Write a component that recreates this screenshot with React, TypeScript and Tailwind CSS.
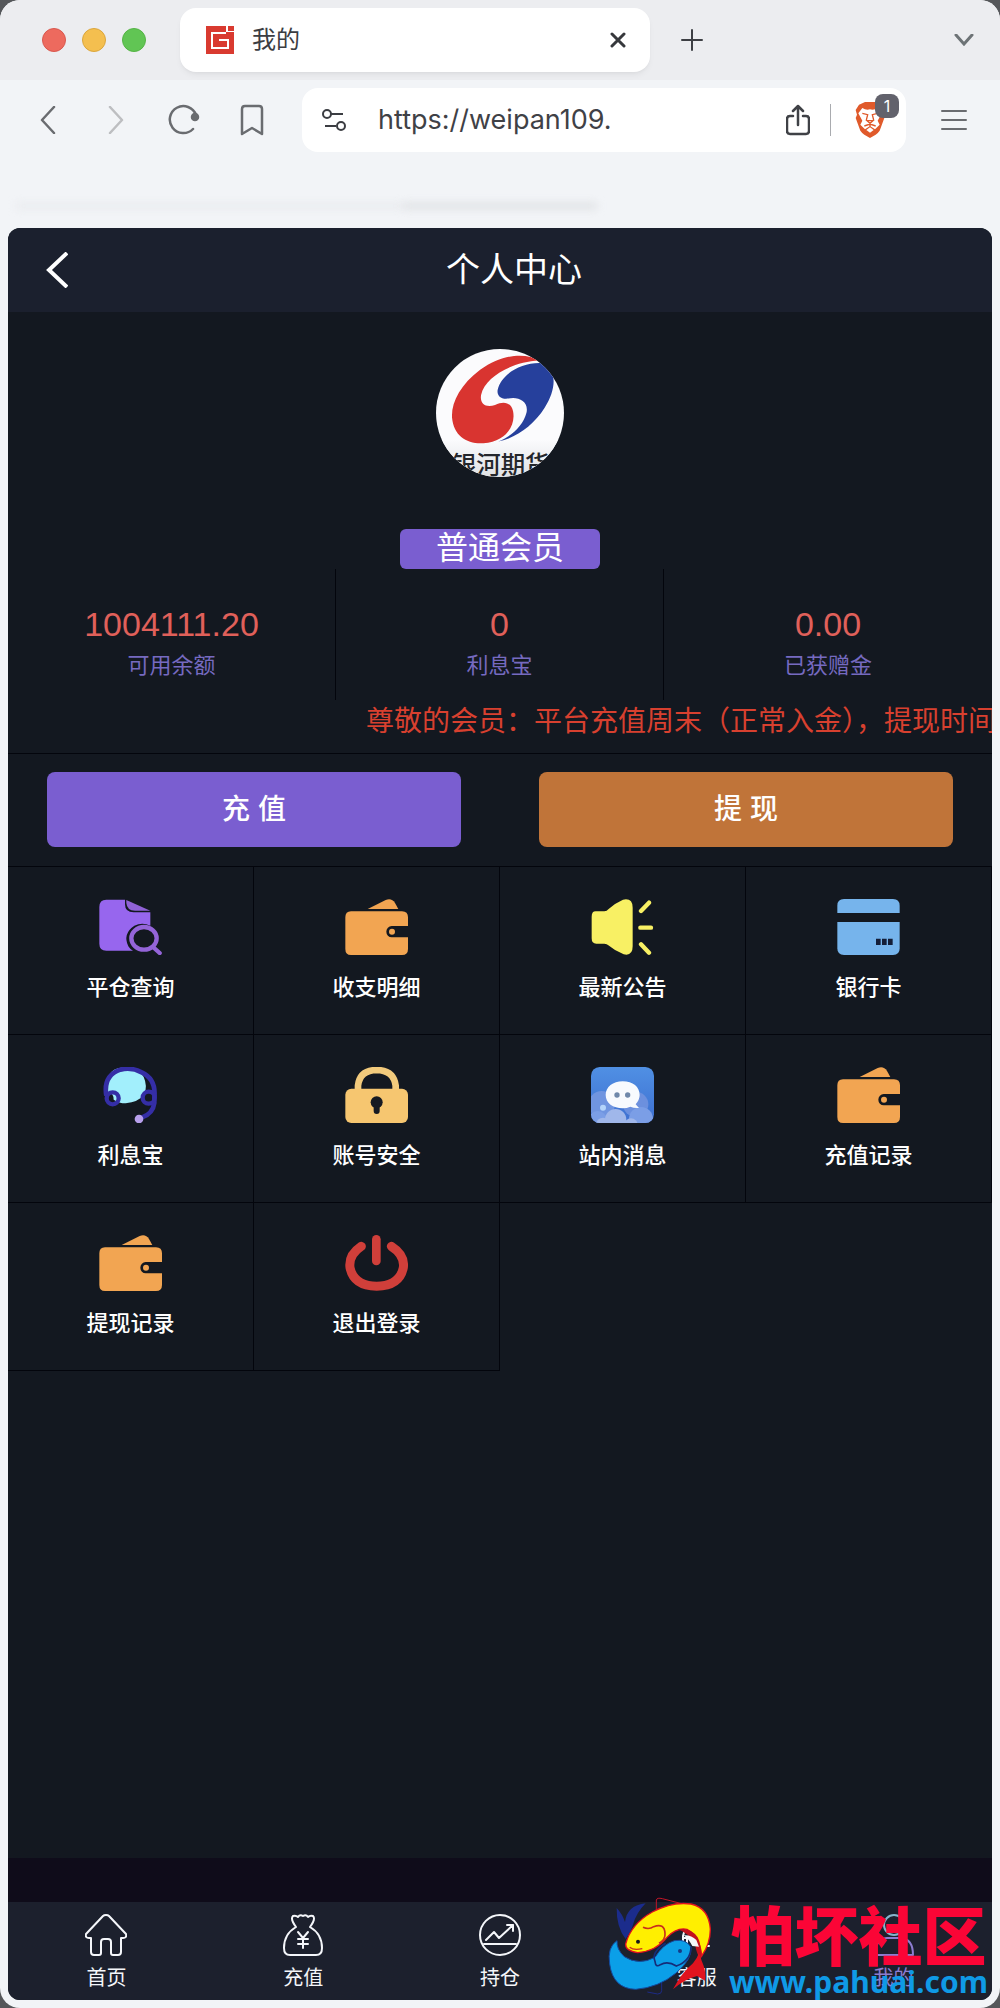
import type { ReactNode } from "react";

const sans = "font-['Liberation_Sans','Noto_Sans_CJK_SC',sans-serif]";

function Favicon() {
  return (
    <svg viewBox="0 0 28 28" className="size-7 shrink-0" aria-hidden="true">
      <path d="M0 0H20V6H28V28H0Z" fill="#d93a30" />
      <rect x="22" y="0" width="6" height="5" fill="#d93a30" />
      <path d="M20 7H6V22H22V14H13" fill="none" stroke="#fff" strokeWidth="2" />
    </svg>
  );
}

function BraveShield() {
  return (
    <svg viewBox="0 0 90 108" className="h-9 w-[30px]" aria-hidden="true">
      <path d="M22 4L30 0H60L68 4L78 8L88 24L84 38L88 48L74 86Q70 92 62 98L45 108L28 98Q20 92 16 86L2 48L6 38L2 24L12 8Z" fill="#e05a2b" />
      <path d="M22 18Q34 26 45 22Q56 26 68 18L80 34L68 56L74 68L60 82L45 72L30 82L16 68L22 56L10 34Z" fill="#fff" />
      <path d="M22 34L38 38L34 54M68 34L52 38L56 54M36 56H54L45 64ZM45 64V74M28 72L45 66L62 72" fill="none" stroke="#e05a2b" strokeWidth="4" />
      <path d="M45 76L56 84L45 92L34 84Z" fill="#fff" />
    </svg>
  );
}

function Avatar() {
  return (
    <svg viewBox="168 57 384 387" className="mt-[37px] size-32 rounded-full bg-[#fbfbfd]" role="img" aria-label="头像">
      <defs>
        <linearGradient id="paper" x1="0" y1="0" x2="0" y2="1">
          <stop offset="0" stopColor="#fbfbfd" />
          <stop offset="1" stopColor="#dfe1e4" />
        </linearGradient>
      </defs>
      <rect x="168" y="330" width="384" height="120" fill="url(#paper)" />
      <path d="M478 92C440 68 370 70 300 120C240 165 212 220 215 265C220 320 260 345 310 342C370 338 400 300 401 260C401 225 380 210 345 226C315 236 298 220 303 195C315 140 400 95 478 92Z" fill="#d93430" />
      <path d="M490 100C534 120 530 180 495 235C460 290 410 325 355 337C395 320 430 290 440 250C448 215 415 200 385 207C360 210 350 195 353 180C365 130 430 95 490 100Z" fill="#26409c" />
      <text x="214" y="434" fontSize="74" fontWeight="500" fill="#24262b" className="font-['Noto_Sans_CJK_SC',sans-serif]">银河期货</text>
    </svg>
  );
}

function TileSvg({ children }: { children: ReactNode }) {
  return (
    <svg viewBox="0 0 189 168" className="h-14 w-[63px]" aria-hidden="true">
      {children}
    </svg>
  );
}

const Wallet = () => (
  <TileSvg>
    <path d="M68 30L122 3Q140 -4 150 12L160 30Z" fill="#f2a552" />
    <path d="M18 37H171Q189 37 189 55V81H140A16 17 0 0 0 140 115H189V150Q189 168 171 168H18Q1 168 1 150V55Q1 37 18 37Z" fill="#f2a552" />
    <circle cx="141" cy="98" r="9" fill="#f2a552" />
  </TileSvg>
);

const SearchDoc = () => (
  <TileSvg>
    <path d="M22 2H78V16Q78 40 104 40H154V80Q130 68 106 80Q70 104 88 142Q94 152 102 155H22Q1 155 1 134V24Q1 2 22 2Z" fill="#9766ee" />
    <path d="M82 3L154 35H108Q84 35 82 12Z" fill="#9062d6" />
    <ellipse cx="135" cy="118" rx="38" ry="34" fill="none" stroke="#9464d8" strokeWidth="13" />
    <path d="M162 144L182 162" stroke="#9464d8" strokeWidth="13" strokeLinecap="round" />
  </TileSvg>
);

const Speaker = () => (
  <TileSvg>
    <path d="M14 37H40Q48 37 52 31Q72 12 96 2Q125 -4 125 26V142Q125 172 98 166Q72 156 52 139Q48 134 40 134H16Q2 134 2 118V53Q2 37 14 37Z" fill="#f8f064" />
    <path d="M150 36L174 11M148 86H180M150 136L174 161" fill="none" stroke="#f8f064" strokeWidth="13" strokeLinecap="round" />
  </TileSvg>
);

const Card = () => (
  <TileSvg>
    <path d="M1 42V20Q1 0 21 0H168Q188 0 188 20V42Z" fill="#76b4ec" />
    <path d="M1 69H188V148Q188 168 168 168H21Q1 168 1 148Z" fill="#76b4ec" />
    <path d="M117 119h14v19h-14zM135 119h14v19h-14zM153 119h14v19h-14z" fill="#141e38" />
  </TileSvg>
);

const Headset = () => (
  <TileSvg>
    <path d="M18 70Q14 40 38 14Q54 0 86 2Q120 6 134 30Q146 56 136 82Q118 106 80 109Q60 109 44 98A20 20 0 0 0 30 76Z" fill="#a2effc" />
    <path d="M22 86Q12 26 64 8Q98 0 128 16Q172 36 166 92V108Q162 140 128 152" fill="none" stroke="#352ea6" strokeWidth="14" />
    <circle cx="41" cy="94" r="18" fill="none" stroke="#352ea6" strokeWidth="13" />
    <circle cx="149" cy="92" r="18" fill="none" stroke="#352ea6" strokeWidth="13" />
    <circle cx="120" cy="156" r="13" fill="#b8a0ec" />
  </TileSvg>
);

const Lock = () => (
  <TileSvg>
    <path d="M39 70V56Q44 10 95 9Q146 10 152 56V70" fill="none" stroke="#f2ca7c" strokeWidth="20" />
    <rect x="1" y="65" width="188" height="103" rx="18" fill="#f6c670" />
    <circle cx="95" cy="106" r="18" fill="#161a22" />
    <path d="M95 110V132" stroke="#161a22" strokeWidth="18" strokeLinecap="round" />
  </TileSvg>
);

const Message = () => (
  <TileSvg>
    <defs>
      <linearGradient id="sky" x1="0" y1="0" x2="0" y2="1">
        <stop offset="0" stopColor="#5090e4" />
        <stop offset="1" stopColor="#3d6fd0" />
      </linearGradient>
      <clipPath id="tile"><rect width="189" height="168" rx="26" /></clipPath>
    </defs>
    <g clipPath="url(#tile)">
      <rect width="189" height="168" fill="url(#sky)" />
      <circle cx="32" cy="112" r="40" fill="#7095e0" />
      <circle cx="134" cy="112" r="38" fill="#6c90de" />
      <circle cx="150" cy="156" r="36" fill="#7b9ee6" />
      <circle cx="20" cy="160" r="28" fill="#7b9ee6" />
      <circle cx="74" cy="158" r="32" fill="#a0b7ea" />
      <circle cx="36" cy="172" r="20" fill="#a0b7ea" />
      <circle cx="120" cy="174" r="20" fill="#a0b7ea" />
      <circle cx="36" cy="122" r="9" fill="#b4d4fa" />
      <path d="M95 43C126 43 146 60 146 84Q146 98 134 112L144 123Q128 124 118 119Q108 124 95 124C66 124 44 108 44 84C44 60 66 43 95 43Z" fill="#f7fafe" />
      <circle cx="78" cy="84" r="8" fill="#6f88aa" />
      <circle cx="110" cy="84" r="8" fill="#6f88aa" />
    </g>
  </TileSvg>
);

const Power = () => (
  <TileSvg>
    <path d="M49 34Q10 60 15 98Q26 152 95 154Q164 152 175 98Q180 60 139 34" fill="none" stroke="#d03f3a" strokeWidth="27" strokeLinecap="round" />
    <path d="M94 13V78" stroke="#d03f3a" strokeWidth="26" strokeLinecap="round" />
  </TileSvg>
);

const tiles: { label: string; Icon: () => ReactNode }[] = [
  { label: "平仓查询", Icon: SearchDoc },
  { label: "收支明细", Icon: Wallet },
  { label: "最新公告", Icon: Speaker },
  { label: "银行卡", Icon: Card },
  { label: "利息宝", Icon: Headset },
  { label: "账号安全", Icon: Lock },
  { label: "站内消息", Icon: Message },
  { label: "充值记录", Icon: Wallet },
  { label: "提现记录", Icon: Wallet },
  { label: "退出登录", Icon: Power },
];

const stats = [
  { value: "1004111.20", label: "可用余额" },
  { value: "0", label: "利息宝" },
  { value: "0.00", label: "已获赠金" },
];

function NavItem({ label, accent, children }: { label: string; accent?: boolean; children: ReactNode }) {
  return (
    <a href="#" className={`flex flex-col items-center pt-3 ${accent ? "text-[#8c7cd0]" : "text-[#f4f6fa]"}`}>
      <svg viewBox="0 0 42 42" className="size-[42px]" fill="none" stroke="currentColor" strokeWidth="2" strokeLinejoin="round" strokeLinecap="round" aria-hidden="true">
        {children}
      </svg>
      <span className="mt-2 text-xl leading-7">{label}</span>
    </a>
  );
}

function Watermark() {
  return (
    <div className="pointer-events-none absolute right-1 bottom-0 flex h-[106px] items-start">
      <svg viewBox="0 0 390 312" className="h-[104px] w-[130px] shrink-0" aria-hidden="true">
        <path d="M80 135Q52 100 53 42Q70 60 78 84Q84 34 140 28Q112 56 102 92Q96 112 80 135Z" fill="#1b2c8c" />
        <path d="M172 60V18Q174 10 190 14L260 32" fill="none" stroke="#c01628" strokeWidth="3" />
        <path d="M145 294L176 300Q188 300 188 290V262" fill="none" stroke="#1d2b86" strokeWidth="3" />
        <path d="M80 150Q96 90 160 54Q220 22 276 30Q330 42 334 106Q334 150 308 186Q304 130 264 106Q232 100 204 130Q170 172 116 176Q78 170 80 150Z" fill="#ffef00" stroke="#e0131e" strokeWidth="4" />
        <path d="M132 100Q150 108 164 98Q196 86 198 118Q200 136 180 148" fill="none" stroke="#c9301c" strokeWidth="5" />
        <path d="M92 160Q104 170 130 164" fill="none" stroke="#c9301c" strokeWidth="4" />
        <circle cx="117" cy="143" r="6" fill="#17181c" />
        <path d="M54 140Q24 160 32 210Q42 284 110 286Q180 280 230 238Q280 196 276 160Q262 134 226 140Q192 150 168 190Q120 216 76 188Q52 166 54 140Z" fill="#0b9fe8" stroke="#14499f" strokeWidth="3" />
        <path d="M200 148Q156 174 168 202Q170 222 184 212Q206 200 232 216Q276 200 276 158" fill="none" stroke="#152c78" strokeWidth="5" />
        <circle cx="243" cy="171" r="6" fill="#163a86" />
        <path d="M236 106Q276 100 296 130Q308 150 306 200Q292 178 288 150Q268 116 236 106Z" fill="#c3121d" />
        <path d="M254 124Q276 122 292 138L300 158L280 156Q268 134 254 124Z" fill="#f5f7fa" />
        <path d="M300 176L308 200Q322 230 318 260L294 246Q256 256 222 286Q248 236 282 208Q294 194 300 176Z" fill="#e0131e" />
      </svg>
      <div className="flex flex-col items-center">
        <span className="font-['Noto_Sans_CJK_SC',sans-serif] text-[64px] leading-[76px] font-black text-[#fb0536]">怕坏社区</span>
        <span className="-mt-1 font-['Noto_Sans',sans-serif] text-[30px] leading-8 font-bold text-[#0f9ae6]">www.pahuai.com</span>
      </div>
    </div>
  );
}

export default function App() {
  return (
    <div className={`${sans} min-h-screen bg-[#55575a]`}>
      <div className="flex min-h-screen flex-col overflow-hidden rounded-[20px] bg-[#f2f4f7]">
        <div className="flex h-20 items-center bg-[#ecedf0] pr-[26px] pl-[42px]">
          <div className="flex gap-4">
            <button aria-label="关闭窗口" className="size-6 rounded-full border border-[#d9584e] bg-[#ed6a5e]" />
            <button aria-label="最小化" className="size-6 rounded-full border border-[#dba63c] bg-[#f4bf4f]" />
            <button aria-label="缩放" className="size-6 rounded-full border border-[#55b445] bg-[#61c554]" />
          </div>
          <div className="ml-[34px] flex h-16 w-[470px] items-center rounded-2xl bg-white pr-6 pl-[26px] shadow-md shadow-black/5">
            <Favicon />
            <span className="ml-[18px] flex-1 text-2xl text-[#3b3d42]">我的</span>
            <button aria-label="关闭标签页">
              <svg viewBox="0 0 16 16" className="size-4" stroke="#36383c" strokeWidth="3" strokeLinecap="round"><path d="M2 2L14 14M14 2L2 14" /></svg>
            </button>
          </div>
          <button aria-label="新标签页" className="ml-[31px]">
            <svg viewBox="0 0 22 22" className="size-[22px]" stroke="#3d3f44" strokeWidth="2" strokeLinecap="round"><path d="M11 1V21M1 11H21" /></svg>
          </button>
          <button aria-label="搜索标签页" className="ml-auto">
            <svg viewBox="0 0 20 12" className="h-3 w-5" fill="none" stroke="#6d7376" strokeWidth="3" strokeLinecap="round"><path d="M2 1L10 10L18 1" /></svg>
          </button>
        </div>

        <div className="flex items-center pt-2 pr-[33px] pl-10">
          <button aria-label="后退">
            <svg viewBox="0 0 16 28" className="h-7 w-4" fill="none" stroke="#6a6c70" strokeWidth="2.5" strokeLinecap="round" strokeLinejoin="round"><path d="M14 1L2 14L14 27" /></svg>
          </button>
          <button aria-label="前进" className="ml-[52px]">
            <svg viewBox="0 0 16 28" className="h-7 w-4" fill="none" stroke="#bdbec1" strokeWidth="2.5" strokeLinecap="round" strokeLinejoin="round"><path d="M2 1L14 14L2 27" /></svg>
          </button>
          <button aria-label="重新加载" className="ml-11">
            <svg viewBox="0 0 32 32" className="size-8" fill="none" stroke="#6a6c70" strokeWidth="2.5" strokeLinecap="round"><path d="M28 11A13.5 13.5 0 1 0 25 25" /><circle cx="27" cy="13" r="3" fill="#6a6c70" /></svg>
          </button>
          <button aria-label="书签" className="ml-10">
            <svg viewBox="0 0 24 32" className="h-8 w-6" fill="none" stroke="#6a6c70" strokeWidth="2.5" strokeLinejoin="round"><path d="M2 5Q2 2 5 2H19Q22 2 22 5V30L12 24L2 30Z" /></svg>
          </button>
          <div className="ml-[38px] flex h-16 flex-1 items-center rounded-2xl bg-white pr-[21px] pl-5">
            <svg viewBox="0 0 24 24" className="size-6 shrink-0" fill="none" stroke="#3b3d42" strokeWidth="2" aria-hidden="true"><circle cx="5" cy="6" r="4" /><path d="M9 6H21M3 18H14" /><circle cx="19" cy="18" r="4" /></svg>
            <input aria-label="网址" defaultValue="https://weipan109." className="ml-8 w-0 flex-1 bg-transparent font-['Inter',sans-serif] text-[27px] text-[#3f4146] outline-none" />
            <button aria-label="分享">
              <svg viewBox="0 0 24 32" className="h-8 w-6" fill="none" stroke="#3f4146" strokeWidth="2.5" strokeLinecap="round" strokeLinejoin="round"><path d="M7 12H4Q1 12 1 15V27Q1 30 4 30H20Q23 30 23 27V15Q23 12 20 12H17M12 21V2M7 7L12 2L17 7" /></svg>
            </button>
            <span className="ml-5 h-8 w-px bg-[#a9abaf]" />
            <button aria-label="Brave Shields" className="relative ml-6">
              <BraveShield />
              <span className="absolute -top-2 -right-3.5 flex size-6 items-center justify-center rounded-lg bg-[#62626c] font-['Inter',sans-serif] text-base text-white">1</span>
            </button>
          </div>
          <button aria-label="菜单" className="ml-[35px]">
            <svg viewBox="0 0 26 22" className="h-[22px] w-[26px]" stroke="#6a6c70" strokeWidth="2" strokeLinecap="round"><path d="M1 2H25M1 11H25M1 20H25" /></svg>
          </button>
        </div>
        <div className="flex h-[76px] items-end px-4 pb-5" aria-hidden="true">
          <div className="h-1 w-2/5 bg-[#e5e7ea] blur-xs" />
          <div className="h-1 w-1/5 bg-[#d4d6d9] blur-xs" />
        </div>

        <div className="flex flex-1 flex-col px-2 pb-2">
          <div className="relative flex flex-1 flex-col overflow-hidden rounded-xl bg-[#131820]">
            <header className="flex h-[84px] items-center justify-between bg-[#1b202e] px-9 text-white">
              <button aria-label="返回" className="w-8">
                <svg viewBox="0 0 24 36" className="h-9 w-6" fill="none" stroke="#fff" strokeWidth="4"><path d="M23 1L5 18L23 35" /></svg>
              </button>
              <h1 className="text-[34px]">个人中心</h1>
              <span className="w-1" />
            </header>

            <main className="flex flex-1 flex-col">
              <section className="flex flex-col items-center">
                <Avatar />
                <span className="mt-[52px] flex h-10 w-[200px] items-center justify-center rounded-md bg-[#7a5ed0] pb-0.5 text-[32px] leading-none text-white">普通会员</span>
              </section>

              <dl className="grid h-[131px] grid-cols-3 divide-x divide-[#03050c] text-center">
                {stats.map((s) => (
                  <div key={s.label} className="flex flex-col-reverse justify-end pt-[35px]">
                    <dt className="mt-1.5 text-[22px] leading-8 text-[#766ac0]">{s.label}</dt>
                    <dd className="text-[34px] leading-10 text-[#e0605a]">{s.value}</dd>
                  </div>
                ))}
              </dl>

              <p className="h-[54px] overflow-hidden border-b border-[#03050c] pl-[358px] text-[28px] leading-[44px] whitespace-nowrap text-[#d8402f]">
                尊敬的会员：平台充值周末（正常入金），提现时间
              </p>

              <div className="grid grid-cols-2 gap-[78px] border-b border-[#03050c] px-[39px] pt-[18px] pb-[19px] text-[28px] font-medium text-white">
                <button className="h-[75px] rounded-lg bg-[#7a5ed0]">充 值</button>
                <button className="h-[75px] rounded-lg bg-[#c07439]">提 现</button>
              </div>

              <nav aria-label="功能" className="grid grid-cols-4">
                {tiles.map(({ label, Icon }) => (
                  <a key={label} href="#" className="flex h-[168px] flex-col items-center border-r border-b border-[#03050c] pt-8 text-white">
                    <Icon />
                    <span className="mt-[17px] text-[22px] leading-8 font-medium">{label}</span>
                  </a>
                ))}
              </nav>
            </main>

            <div className="h-11 bg-[#0f0c1a]" />
            <nav aria-label="主导航" className="grid h-[98px] grid-cols-5 bg-[#1c202d]">
              <NavItem label="首页">
                <path d="M21 1Q19 1 18 2L1 20Q0 24 4 24H6V38Q6 41 9 41H14Q16 41 16 39V28Q16 25 19 25H23Q26 25 26 28V39Q26 41 28 41H33Q36 41 36 38V24H38Q42 24 41 20L24 2Q23 1 21 1Z" />
              </NavItem>
              <NavItem label="充值">
                <path d="M14 13Q8 5 11 2Q14 1 16 3Q18 0 21 2Q24 0 26 3Q28 1 31 2Q34 5 28 13Q40 20 40 34Q40 41 34 41H8Q2 41 2 34Q2 20 14 13Z" />
                <path d="M16 18L21 24L26 18M16 25H26M16 30H26M21 24V34" />
              </NavItem>
              <NavItem label="持仓">
                <circle cx="21" cy="21" r="20" />
                <path d="M5 30H37M7 26L15 18L20 24L34 11M28 11H34V17" />
              </NavItem>
              <NavItem label="客服">
                <path d="M7 32V22A12 12 0 0 1 28 16M7 24H11V32H7M30 32H33" />
              </NavItem>
              <NavItem label="我的" accent>
                <circle cx="21" cy="11" r="10" stroke="#86b4cc" />
                <path d="M2 41Q2 25 14 24H28Q40 25 40 41Z" />
              </NavItem>
            </nav>
            <Watermark />
          </div>
        </div>
      </div>
    </div>
  );
}
